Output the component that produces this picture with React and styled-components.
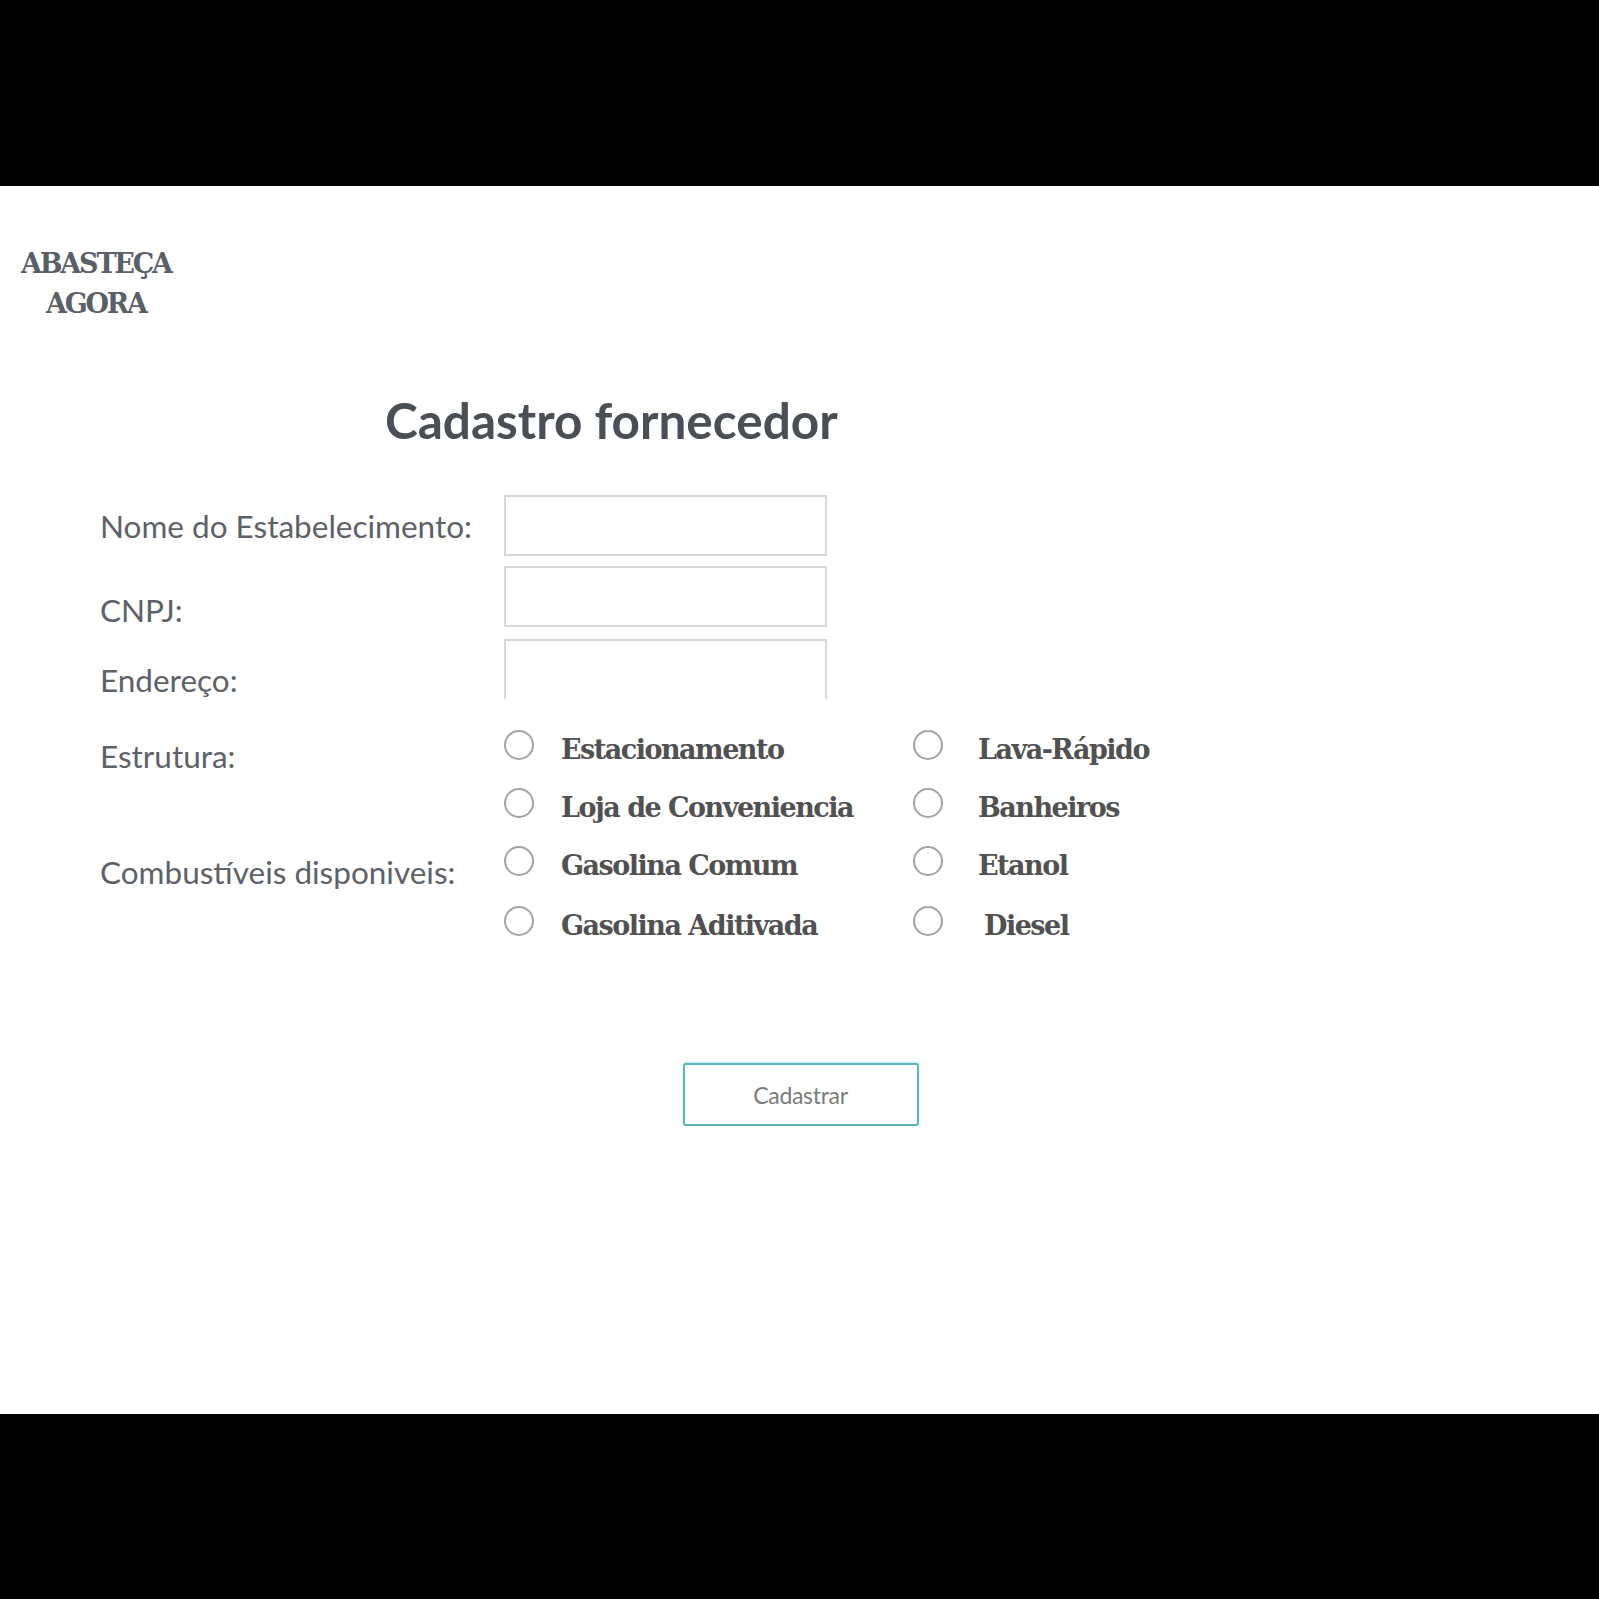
import React from "react";
import styled, { createGlobalStyle } from "styled-components";

const Global = createGlobalStyle`
  html, body { margin: 0; padding: 0; background: #000; }
  body { width: 1599px; height: 1599px; overflow: hidden; }
`;

const Frame = styled.div`
  width: 1599px;
  height: 1599px;
  background: #000;
  padding-top: 186px;
  box-sizing: border-box;
`;

const Screen = styled.main`
  background: #fff;
  height: 1228px;
  padding-top: 58px;
  box-sizing: border-box;
  display: flex;
  flex-direction: column;
`;

const Logo = styled.div`
  align-self: flex-start;
  margin-left: 21px;
  text-align: center;
  font-family: "DejaVu Serif", serif;
  font-weight: 700;
  font-size: 27px;
  line-height: 40px;
  color: #5b6068;
  letter-spacing: -2.2px;
`;

const Title = styled.h1`
  margin: 67px 0 0 385px;
  font-family: Lato, sans-serif;
  font-weight: 700;
  font-size: 49.5px;
  line-height: 58px;
  color: #4a4e55;
`;

const Form = styled.form`
  margin: 46px 0 0 100px;
  display: flex;
  flex-direction: column;
`;

const Row = styled.div`
  display: flex;
  align-items: flex-start;
  margin-top: ${(p) => p.$mt || 0}px;
`;

const Label = styled.label`
  width: 404px;
  flex: none;
  padding-top: ${(p) => p.$pt}px;
  font-family: Lato, sans-serif;
  font-size: 31.5px;
  line-height: 36px;
  color: #5d6168;
  white-space: nowrap;
`;

const TextInput = styled.input`
  width: 323px;
  height: 61px;
  box-sizing: border-box;
  margin: 0;
  padding: 0 10px;
  border: 2px solid #d8d8d8;
  border-bottom-color: ${(p) => (p.$open ? "transparent" : "#d8d8d8")};
  background: #fff;
  font-family: Lato, sans-serif;
  font-size: 22px;
  outline: none;
`;

const RadioGrid = styled.div`
  display: grid;
  grid-template-columns: 409px auto;
  grid-auto-rows: 58px;
  row-gap: ${(p) => p.$rowGap || 0}px;
`;

const Option = styled.label`
  display: flex;
  align-items: center;
  gap: ${(p) => p.$gap}px;
`;

const Radio = styled.input.attrs({ type: "radio" })`
  appearance: none;
  margin: 0;
  width: 30px;
  height: 30px;
  flex: none;
  box-sizing: border-box;
  border-radius: 50%;
  border: 2px solid #a3a3a3;
  background: #fff;
`;

const OptionText = styled.span`
  font-family: "DejaVu Serif", serif;
  font-weight: 700;
  font-size: 27px;
  letter-spacing: -1.5px;
  color: #515151;
  padding-top: 9px;
  padding-left: ${(p) => p.$indent || 0}px;
  white-space: nowrap;
`;

const ButtonBar = styled.div`
  display: flex;
  justify-content: center;
  padding-left: 2px;
  margin-top: 113px;
`;

const Button = styled.button`
  width: 236px;
  height: 63px;
  box-sizing: border-box;
  background: #fff;
  border: 2px solid #5cb5bd;
  border-radius: 3px;
  box-shadow: 0 -1px 2px rgba(110, 215, 240, 0.5);
  font-family: Lato, sans-serif;
  font-size: 23px;
  color: #7b7b7b;
  letter-spacing: -0.3px;
  cursor: pointer;
`;

const estrutura = [
  ["Estacionamento", "Lava-Rápido"],
  ["Loja de Conveniencia", "Banheiros"],
];
const combustiveis = [
  ["Gasolina Comum", "Etanol"],
  ["Gasolina Aditivada", "Diesel"],
];

function OptionGrid({ rows, name, rowGap }) {
  return (
    <RadioGrid $rowGap={rowGap}>
      {rows.flatMap(([a, b]) => [
        <Option key={a} $gap={27}>
          <Radio name={name + a} />
          <OptionText>{a}</OptionText>
        </Option>,
        <Option key={b} $gap={35}>
          <Radio name={name + b} />
          <OptionText $indent={b === "Diesel" ? 6 : 0}>{b}</OptionText>
        </Option>,
      ])}
    </RadioGrid>
  );
}

export default function App() {
  return (
    <Frame>
      <Global />
      <Screen>
        <Logo>
          ABASTEÇA
          <br />
          AGORA
        </Logo>
        <Title>Cadastro fornecedor</Title>
        <Form onSubmit={(e) => e.preventDefault()}>
          <Row>
            <Label $pt={13}>Nome do Estabelecimento:</Label>
            <TextInput />
          </Row>
          <Row $mt={10}>
            <Label $pt={26}>CNPJ:</Label>
            <TextInput />
          </Row>
          <Row $mt={11}>
            <Label $pt={23}>Endereço:</Label>
            <TextInput $open />
          </Row>
          <Row $mt={16}>
            <Label $pt={22}>Estrutura:</Label>
            <OptionGrid rows={estrutura} name="estrutura" />
          </Row>
          <Row>
            <Label $pt={22}>Combustíveis disponiveis:</Label>
            <OptionGrid rows={combustiveis} name="comb" rowGap={2} />
          </Row>
        </Form>
        <ButtonBar>
          <Button type="button">Cadastrar</Button>
        </ButtonBar>
      </Screen>
    </Frame>
  );
}
